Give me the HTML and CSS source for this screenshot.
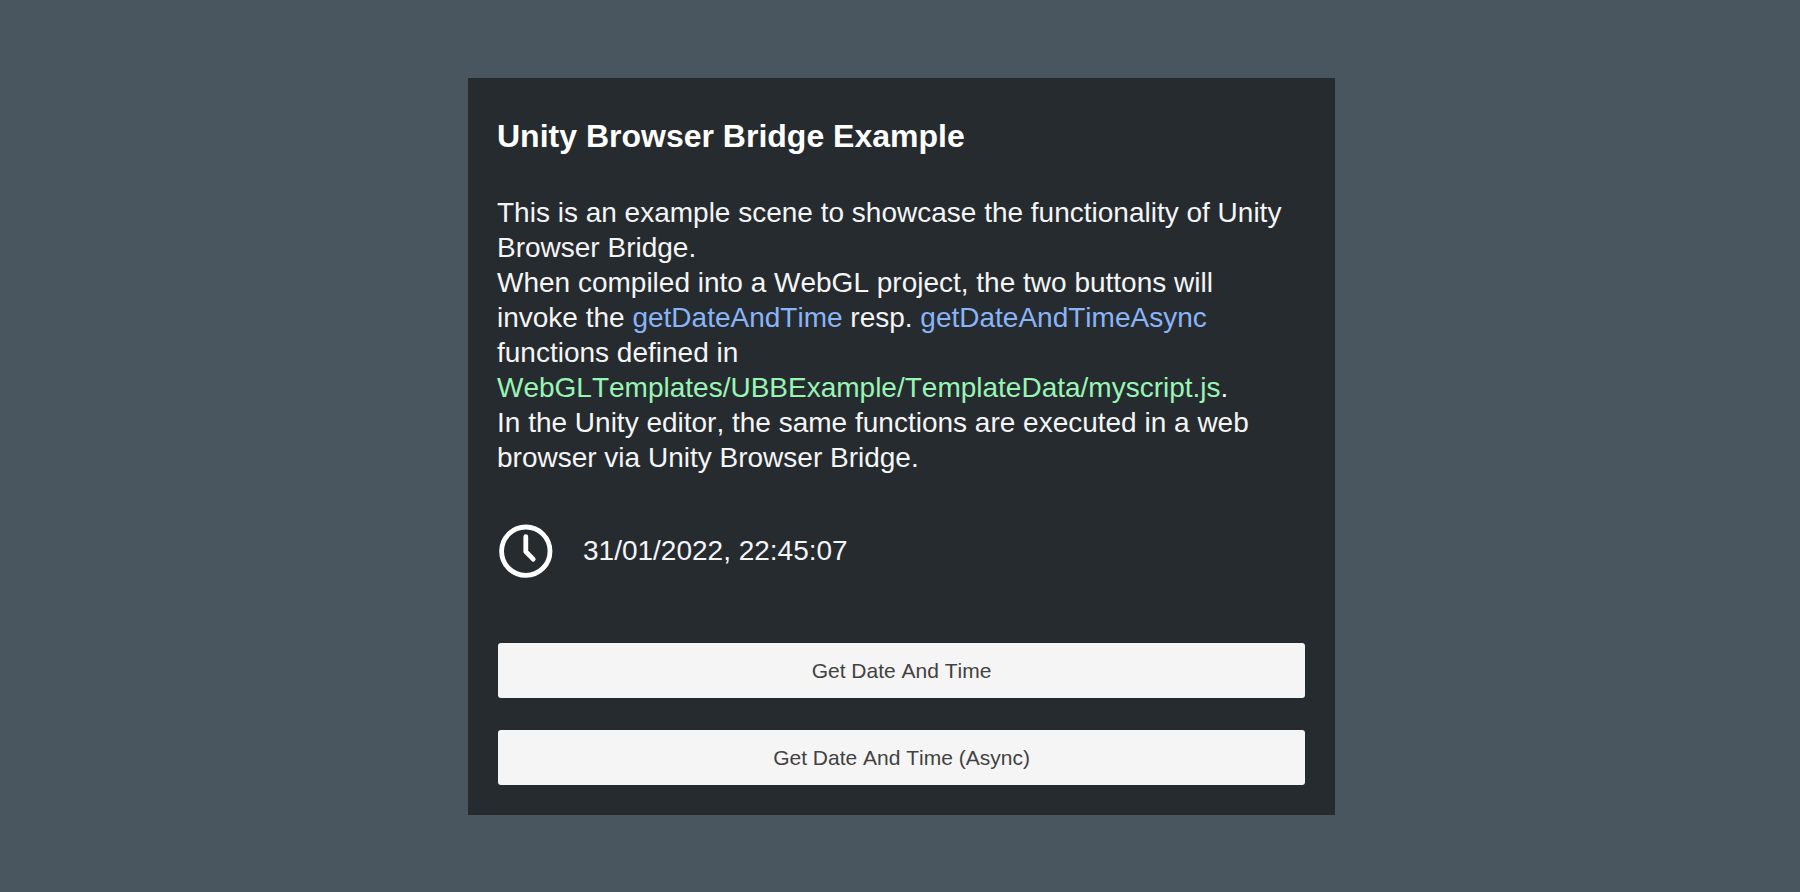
FILE: index.html
```html
<!DOCTYPE html>
<html lang="en">
<head>
<meta charset="utf-8">
<meta name="viewport" content="width=device-width, initial-scale=1">
<title>Unity Browser Bridge Example</title>
<link rel="stylesheet" href="styles.css">
</head>
<body class="page">
<main class="card">
  <h1 class="title">Unity Browser Bridge Example</h1>
  <p class="description">This is an example scene to showcase the functionality of Unity Browser Bridge.<br>
    When compiled into a WebGL project, the two buttons will invoke the <span class="function">getDateAndTime</span> resp. <span class="function">getDateAndTimeAsync</span> functions defined in <span class="path">WebGLTemplates/UBBExample/TemplateData/myscript.js</span>.<br>
    In the Unity editor, the same functions are executed in a web browser via Unity Browser Bridge.</p>
  <div class="clock">
    <svg class="clock-icon" viewBox="0 0 56 56" aria-hidden="true">
      <circle cx="28.8" cy="28.2" r="24.2"/>
      <path d="M28.8 13.7V28.6l7.4 7.6"/>
    </svg>
    <time datetime="2022-01-31T22:45:07">31/01/2022, 22:45:07</time>
  </div>
  <div class="actions">
    <button class="button" type="button">Get Date And Time</button>
    <button class="button" type="button">Get Date And Time (Async)</button>
  </div>
</main>
</body>
</html>
```

FILE: styles.css
```css
* {
  box-sizing: border-box;
}

.page {
  margin: 0;
  min-height: 100vh;
  display: grid;
  grid-template-columns: 468fr 867fr 465fr;
  align-items: center;
  background: #4a565f;
  font-family: "Liberation Sans", Arial, sans-serif;
  font-kerning: none;
  color: #f5f5f5;
}

.card {
  grid-column: 2;
  padding: 38px 29px 30px;
  background: #262b2f;
  font-size: 28px;
  line-height: 35px;
}

.title {
  margin: 0 0 39px;
  font-size: 32px;
  line-height: 40px;
  color: #fff;
}

.description {
  margin: 0 0 48px;
  padding-right: 10px;
}

.function {
  color: #8ab4f8;
}

.path {
  color: #98f5b4;
}

.clock {
  display: flex;
  align-items: center;
  gap: 30px;
  margin-bottom: 64px;
}

.clock-icon {
  width: 56px;
  height: 56px;
  fill: none;
  stroke: #fff;
  stroke-width: 4.8;
  stroke-linecap: round;
  stroke-linejoin: round;
}

.actions {
  display: grid;
  gap: 32px;
  padding: 0 1px;
}

.button {
  height: 55px;
  border: 0;
  border-radius: 3px;
  background: #f5f5f5;
  color: #424242;
  font-family: inherit;
  font-size: 21px;
  font-kerning: none;
  line-height: 27px;
  cursor: pointer;
}
```
